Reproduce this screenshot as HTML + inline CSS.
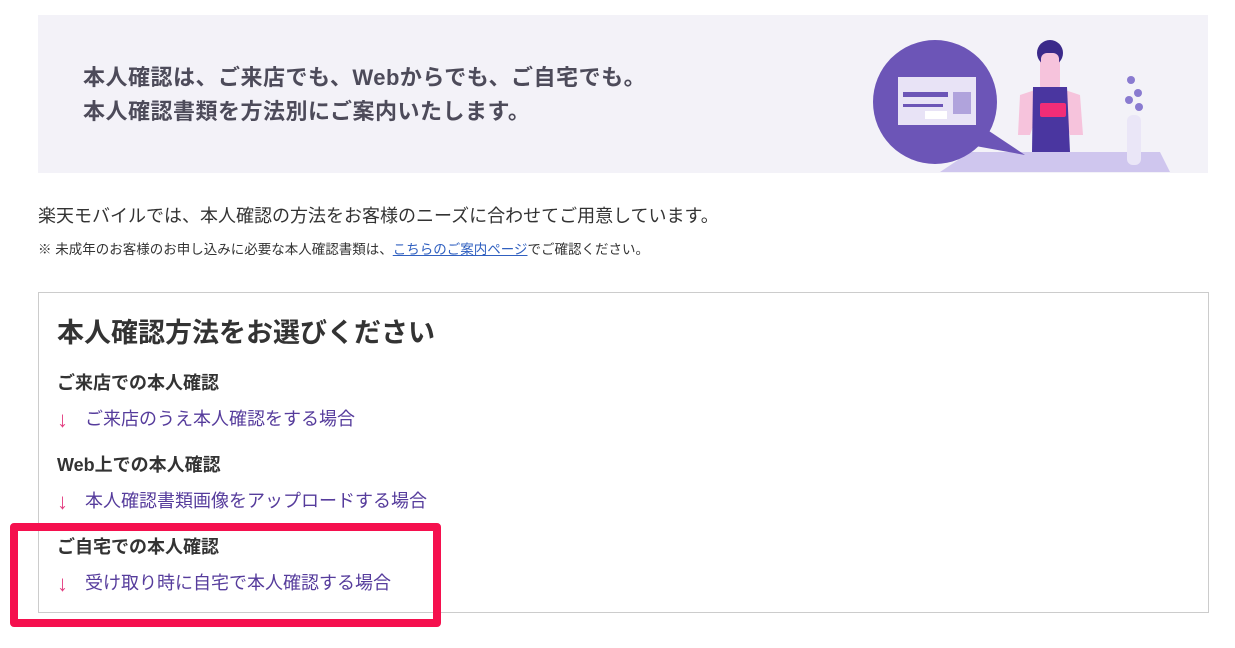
<!DOCTYPE html>
<html><head><meta charset="utf-8"><style>
body{margin:0;width:1235px;height:648px;background:#fff;font-family:"Liberation Sans","Noto Sans CJK JP",sans-serif;position:relative;overflow:hidden;color:#333}
.a{position:absolute;white-space:nowrap}
.l{font-size:18px;color:#563c9c}
.l span{color:#e33f82;display:inline-block;width:28px;font-size:22px;line-height:18px;vertical-align:-2px}
</style></head><body>
<div class="a" style="left:38px;top:15px;width:1170px;height:158px;background:#f3f2f8"></div>
<div class="a" style="left:83px;top:61px;font-size:22px;font-weight:bold;color:#4d4b5a;line-height:34px;letter-spacing:0.5px">本人確認は、ご来店でも、Webからでも、ご自宅でも。<br>本人確認書類を方法別にご案内いたします。</div>
<svg class="a" style="left:840px;top:15px" width="370" height="158" viewBox="0 0 370 158">
<polygon points="100,157 130,137 320,137 330,157" fill="#cfc6ee"/>
<circle cx="95" cy="87" r="62" fill="#6c55b7"/>
<polygon points="140,110 185,140 130,130" fill="#6c55b7"/>
<rect x="58" y="62" width="78" height="48" fill="#e8e3f6"/>
<rect x="63" y="77" width="45" height="5" fill="#6c55b7"/>
<rect x="113" y="77" width="18" height="22" fill="#b0a3dc"/>
<rect x="63" y="89" width="40" height="3" fill="#6c55b7"/>
<rect x="85" y="96" width="22" height="8" fill="#fff"/>
<path d="M195 75 L180 80 L178 120 L190 120 L200 90Z" fill="#f6c3dc"/>
<path d="M225 75 L240 80 L243 120 L230 120 L220 90Z" fill="#f6c3dc"/>
<rect x="200" y="38" width="20" height="40" rx="8" fill="#f6c3dc"/>
<circle cx="210" cy="38" r="13" fill="#3b2a8a"/>
<rect x="201" y="38" width="18" height="18" rx="6" fill="#f6c3dc"/>
<path d="M193 72 L227 72 L230 137 L192 137Z" fill="#4a36a0"/>
<rect x="200" y="88" width="26" height="14" rx="2" fill="#f22d77"/>
<rect x="287" y="100" width="14" height="50" rx="6" fill="#eae6f7"/>
<circle cx="291" cy="65" r="4" fill="#8a7bd0"/><circle cx="298" cy="78" r="4" fill="#8a7bd0"/><circle cx="289" cy="85" r="4" fill="#8a7bd0"/><circle cx="299" cy="92" r="4" fill="#8a7bd0"/>
</svg>
<div class="a" style="left:38px;top:202px;font-size:18px;color:#333">楽天モバイルでは、本人確認の方法をお客様のニーズに合わせてご用意しています。</div>
<div class="a" style="left:38px;top:238px;font-size:13.5px;color:#333">※ 未成年のお客様のお申し込みに必要な本人確認書類は、<span style="color:#3060c0;text-decoration:underline">こちらのご案内ページ</span>でご確認ください。</div>
<div class="a" style="left:38px;top:292px;width:1169px;height:319px;border:1px solid #ccc"></div>
<div class="a" style="left:57px;top:311px;font-size:27px;font-weight:bold;color:#333">本人確認方法をお選びください</div>
<div class="a" style="left:57px;top:369px;font-size:18px;font-weight:bold">ご来店での本人確認</div>
<div class="a l" style="left:57px;top:405px"><span>↓</span>ご来店のうえ本人確認をする場合</div>
<div class="a" style="left:57px;top:451px;font-size:18px;font-weight:bold">Web上での本人確認</div>
<div class="a l" style="left:57px;top:487px"><span>↓</span>本人確認書類画像をアップロードする場合</div>
<div class="a" style="left:57px;top:533px;font-size:18px;font-weight:bold">ご自宅での本人確認</div>
<div class="a l" style="left:57px;top:569px"><span>↓</span>受け取り時に自宅で本人確認する場合</div>
<div class="a" style="left:10px;top:523px;width:415px;height:88px;border:8px solid #f5104e;border-radius:4px"></div>
</body></html>
